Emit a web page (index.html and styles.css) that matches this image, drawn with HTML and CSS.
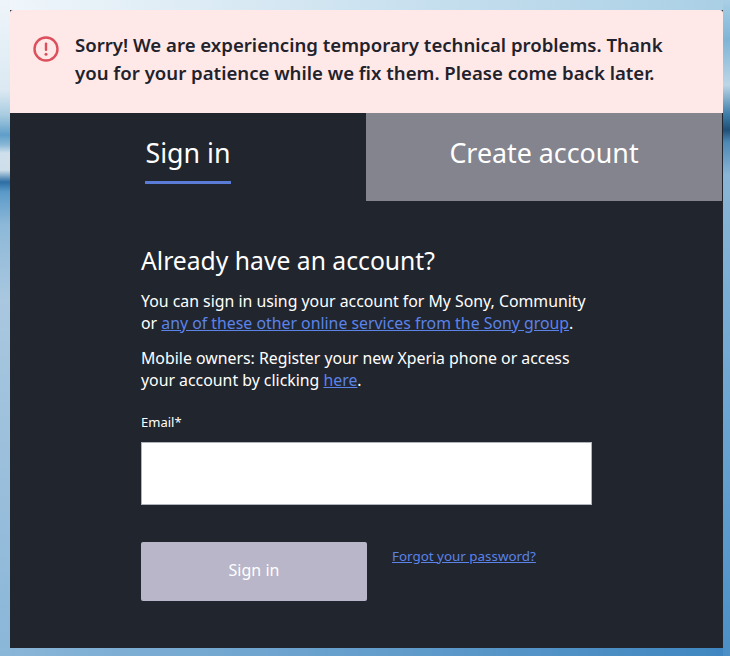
FILE: index.html
```html
<!DOCTYPE html>
<html lang="en">
<head>
    <meta charset="UTF-8">
    <meta name="viewport" content="width=device-width, initial-scale=1.0">
    <title>Sign in</title>
    <link rel="stylesheet" href="styles.css">
</head>
<body>
    <div class="card">
        <!-- Error message -->
        <div class="alert">
            <svg class="alert-icon" width="28" height="28" viewBox="0 0 28 28">
                <circle cx="14" cy="14" r="11.5" fill="none" stroke="#dc4f5c" stroke-width="2.4"/>
                <rect x="12.8" y="7.5" width="2.4" height="8.5" rx="1" fill="#dc4f5c"/>
                <circle cx="14" cy="19.3" r="1.5" fill="#dc4f5c"/>
            </svg>
            <p class="alert-text">Sorry! We are experiencing temporary technical problems. Thank you for your patience while we fix them. Please come back later.</p>
        </div>

        <!-- Tabs -->
        <div class="tabs">
            <div class="tab tab-active"><span class="tab-label">Sign in</span></div>
            <div class="tab tab-other"><span>Create account</span></div>
        </div>

        <!-- Form -->
        <div class="content">
            <h2>Already have an account?</h2>
            <p class="info">You can sign in using your account for My Sony, Community or <a href="#">any of these other online services from the Sony group</a>.</p>
            <p class="info">Mobile owners: Register your new Xperia phone or access your account by clicking <a href="#">here</a>.</p>
            <label class="field-label" for="email">Email*</label>
            <input class="field" type="text" id="email">
            <div class="actions">
                <button class="submit">Sign in</button>
                <a class="forgot" href="#">Forgot your password?</a>
            </div>
        </div>
    </div>
</body>
</html>
```

FILE: styles.css
```css
html, body {
    height: 100%;
}

body {
    font-family: "Noto Sans", "Open Sans", sans-serif;
    margin: 0;
    box-sizing: border-box;
    padding: 10px 7px 8px 10px;
    color: #fff;
    background-color: #7fb2d6;
    background-image:
        linear-gradient(to bottom, #eef5fa 0, #dce9f2 90px, #a8cce0 115px, #5f9ec9 135px, #8ab8d6 145px, #cfe0ec 153px, #cfdfea 170px, #2c6da3 182px, #5a9ac8 192px, #8db8d8 225px, #a9c7df 300px, #8ab6d8 656px),
        linear-gradient(to bottom, #a9cfe5 0, #7fb4d6 40px, #bcd6e6 85px, #3b7ca8 115px, #1f4f75 130px, #4d88b4 142px, #8ab5d5 175px, #6da6d2 400px, #4b8fc6 656px),
        linear-gradient(to right, #f0f6fb, #a9cfe5),
        linear-gradient(to right, #8ab6d8, #3f86c0);
    background-size: 10px 100%, 7px 100%, 100% 10px, 100% 8px;
    background-position: left top, right top, left top, left bottom;
    background-repeat: no-repeat;
}

.card {
    height: 100%;
    background-color: #21252e;
    display: flex;
    flex-direction: column;
}

/* Alert */
.alert {
    display: flex;
    background-color: #ffe9e8;
    color: #22222c;
    height: 103px;
    box-sizing: border-box;
    padding: 21px 44px 0 22px;
    border-radius: 3px 3px 0 0;
}

.alert-icon {
    flex: none;
    margin: 4px 15px 0 0;
}

.alert-text {
    margin: 0;
    font-size: 18.6px;
    font-weight: 600;
    line-height: 28px;
}

/* Tabs */
.tabs {
    display: flex;
    height: 88px;
    margin-right: 1px;
}

.tab {
    flex: 1;
    font-size: 26.8px;
    line-height: 40px;
    text-align: center;
}

.tab-label {
    display: inline-block;
    height: 71px;
    box-sizing: border-box;
    padding-top: 20px;
    border-bottom: 3px solid #5a7bd6;
}

.tab-other {
    background-color: #84848f;
    padding-top: 20px;
}

/* Form */
.content {
    width: 451px;
    padding: 43px 0 0 131px;
}

h2 {
    margin: 0 0 12px;
    font-size: 24.7px;
    font-weight: 400;
    line-height: 34px;
}

.info {
    margin: 0 0 13px;
    font-size: 15.85px;
    line-height: 22px;
}

.info a, .forgot {
    color: #5b83e8;
}

.field-label {
    display: block;
    margin-top: 21px;
    font-size: 13px;
    line-height: 20px;
}

.field {
    display: block;
    box-sizing: border-box;
    width: 100%;
    height: 63px;
    margin-top: 10px;
    background-color: #fff;
    border: 1px solid #b0b3bd;
    border-radius: 0;
}

.actions {
    display: flex;
    margin-top: 37px;
}

.submit {
    width: 226px;
    height: 59px;
    padding-bottom: 4px;
    background-color: #b8b6c8;
    color: #fff;
    border: none;
    border-radius: 2px;
    font-family: inherit;
    font-size: 16px;
}

.forgot {
    margin: 4px 0 0 25px;
    font-size: 13.4px;
    line-height: 20px;
}
```
